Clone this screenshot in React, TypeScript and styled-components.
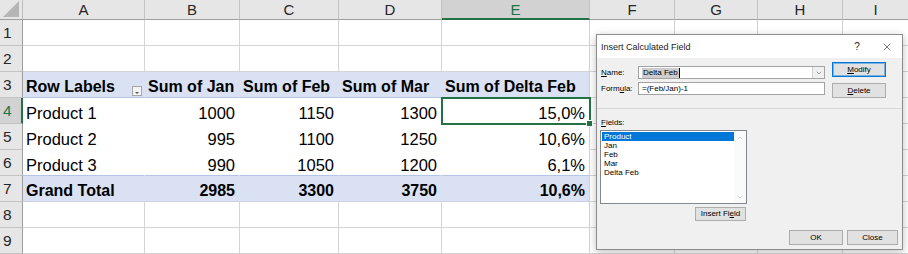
import * as React from 'react';
import styled, { createGlobalStyle, css } from 'styled-components';
import { ChevronDown, ChevronUp, X } from 'lucide-react';

const GlobalStyle = createGlobalStyle`
  html, body {
    margin: 0;
    padding: 0;
    background: #fff;
    overflow: hidden;
  }
  body {
    font-family: 'Liberation Sans', Arial, sans-serif;
  }
`;

const COLS = ['A', 'B', 'C', 'D', 'E', 'F', 'G', 'H', 'I'];
const COL_WIDTHS = [122, 95, 99, 103, 148, 85, 83, 85, 66];
const ACTIVE_COL = 4;
const ACTIVE_ROW = 4;

type CellKind = 'plain' | 'head' | 'body' | 'total';

type CellProps = {
  $kind: CellKind;
  $right?: boolean;
  $edge?: boolean;
  $beforeTotal?: boolean;
  $active?: boolean;
};

const pivot = [
  ['Row Labels', 'Sum of Jan', 'Sum of Feb', 'Sum of Mar', 'Sum of Delta Feb'],
  ['Product 1', '1000', '1150', '1300', '15,0%'],
  ['Product 2', '995', '1100', '1250', '10,6%'],
  ['Product 3', '990', '1050', '1200', '6,1%'],
  ['Grand Total', '2985', '3300', '3750', '10,6%'],
];

const fields = ['Product', 'Jan', 'Feb', 'Mar', 'Delta Feb'];

const Sheet = styled.div`
  position: relative;
  display: grid;
  grid-template-columns: 23px ${COL_WIDTHS.map((w) => `${w}px`).join(' ')};
  grid-template-rows: 20px repeat(9, 26px);
  width: 908px;
  height: 254px;
  overflow: hidden;
`;

const Corner = styled.div`
  display: flex;
  align-items: flex-end;
  justify-content: flex-end;
  padding: 0 3px 2px 0;
  background: #e6e6e6;
  border-right: 1px solid #bdbdbd;
  border-bottom: 1px solid #9e9e9e;
  box-sizing: border-box;

  &::after {
    content: '';
    width: 16px;
    height: 16px;
    background: #b5b5b5;
    clip-path: polygon(100% 0, 100% 100%, 0 100%);
  }
`;

const ColHead = styled.div<{ $active?: boolean }>`
  display: flex;
  align-items: center;
  justify-content: center;
  box-sizing: border-box;
  font-size: 15px;
  color: ${({ $active }) => ($active ? '#217346' : '#262626')};
  background: ${({ $active }) => ($active ? '#d2d2d2' : '#e6e6e6')};
  border-right: 1px solid #c3c3c3;
  border-bottom: ${({ $active }) => ($active ? '2px solid #217346' : '1px solid #9e9e9e')};
`;

const RowHead = styled.div<{ $active?: boolean }>`
  display: flex;
  align-items: center;
  padding-left: 3px;
  box-sizing: border-box;
  font-size: 15.5px;
  color: ${({ $active }) => ($active ? '#217346' : '#262626')};
  background: ${({ $active }) => ($active ? '#d2d2d2' : '#e6e6e6')};
  border-bottom: 1px solid #c3c3c3;
  border-right: ${({ $active }) => ($active ? '2px solid #217346' : '1px solid #9e9e9e')};
`;

const kindStyles = {
  plain: css``,
  head: css<CellProps>`
    background: #d9e1f2;
    font-weight: bold;
    font-size: 16px;
    border-right-color: ${({ $edge }) => ($edge ? '#d4d4d4' : '#d9e1f2')};
    border-bottom-color: #b4c6e7;
  `,
  body: css<CellProps>`
    border-right-color: ${({ $edge }) => ($edge ? '#d4d4d4' : '#fff')};
    border-bottom-color: ${({ $beforeTotal }) => ($beforeTotal ? '#b4c6e7' : '#fff')};
  `,
  total: css<CellProps>`
    background: #d9e1f2;
    font-weight: bold;
    font-size: 16px;
    border-right-color: ${({ $edge }) => ($edge ? '#d4d4d4' : '#d9e1f2')};
    border-bottom-color: #c8d1e6;
  `,
};

const Cell = styled.div<CellProps>`
  position: relative;
  display: flex;
  align-items: flex-end;
  justify-content: ${({ $right }) => ($right ? 'flex-end' : 'flex-start')};
  padding: ${({ $right }) => ($right ? '0 4px 0 0' : '0 0 0 3px')};
  box-sizing: border-box;
  font-size: 16.5px;
  line-height: 20px;
  color: #000;
  white-space: nowrap;
  background: #fff;
  border-right: 1px solid #d4d4d4;
  border-bottom: 1px solid #d4d4d4;
  ${({ $kind }) => kindStyles[$kind]}

  ${({ $active }) =>
    $active &&
    css`
      z-index: 2;
      outline: 2px solid #217346;
      outline-offset: -1px;

      &::after {
        content: '';
        position: absolute;
        right: -4px;
        bottom: -4px;
        width: 5px;
        height: 5px;
        background: #217346;
        border: 1px solid #fff;
      }
    `}
`;

const FilterButton = styled.span`
  display: flex;
  align-items: center;
  justify-content: center;
  width: 10px;
  height: 10px;
  margin: 0 2px 1px auto;
  box-sizing: border-box;
  border: 1px solid #a6a6a6;
  background: #f4f4f4;

  &::after {
    content: '';
    margin-top: 3px;
    border-left: 2px solid transparent;
    border-right: 2px solid transparent;
    border-top: 2px solid #555;
  }
`;

const Dialog = styled.div`
  position: absolute;
  left: 596px;
  top: 34px;
  z-index: 5;
  width: 307px;
  box-sizing: border-box;
  display: flex;
  flex-direction: column;
  border: 1px solid #8c8c8c;
  background: #f0f0f0;
  box-shadow: 0 2px 8px rgba(0, 0, 0, 0.25);
  font-family: 'Liberation Sans', Arial, sans-serif;
  font-size: 8px;
  line-height: 10px;
  color: #000;
`;

const TitleBar = styled.div`
  display: flex;
  align-items: center;
  height: 23px;
  padding-left: 4px;
  background: #fff;
  font-size: 9px;
  color: #1a1a1a;
`;

const TitleText = styled.span`
  flex: 1;
`;

const TitleButton = styled.span`
  display: flex;
  align-items: center;
  justify-content: center;
  width: 30px;
  height: 100%;
  font-size: 10px;
  color: #222;
`;

const TopSection = styled.div`
  display: flex;
  padding-left: 4px;
`;

const FormCol = styled.div`
  display: flex;
  flex-direction: column;
  gap: 3px;
  margin-top: 8px;
`;

const FormRow = styled.div`
  display: flex;
  align-items: center;
  height: 13px;
`;

const Label = styled.span`
  width: 37px;
`;

const TextBox = styled.div`
  display: flex;
  align-items: center;
  width: 187px;
  height: 13px;
  box-sizing: border-box;
  padding-left: 3px;
  border: 1px solid #a3a3a3;
  background: #fff;
`;

const Selection = styled.span`
  background: #cdcdcd;
  padding: 0 1px;
  border-right: 1px solid #000;
`;

const ComboArrow = styled.span`
  display: flex;
  align-items: center;
  justify-content: center;
  width: 11px;
  height: 100%;
  margin-left: auto;
  border-left: 1px solid #d0d0d0;
  background: #f0f0f0;
  color: #606060;
`;

const ButtonCol = styled.div`
  display: flex;
  flex-direction: column;
  gap: 6px;
  margin: 4px 0 0 7px;
`;

const Button = styled.div<{ $default?: boolean; $w: number; $h?: number }>`
  display: flex;
  align-items: center;
  justify-content: center;
  width: ${({ $w }) => $w}px;
  height: ${({ $h = 15 }) => $h}px;
  box-sizing: border-box;
  background: #e1e1e1;
  border: 1px solid ${({ $default }) => ($default ? '#0078d7' : '#adadad')};
  box-shadow: ${({ $default }) => ($default ? 'inset 0 0 0 1px rgba(0, 120, 215, 0.45)' : 'none')};
`;

const Separator = styled.div`
  height: 1px;
  margin-top: 10px;
  background: #d9d9d9;
`;

const FieldsCol = styled.div`
  display: flex;
  flex-direction: column;
  width: 147px;
  margin-left: 3px;
`;

const FieldsLabel = styled.span`
  margin-top: 9px;
  padding-left: 1px;
`;

const ListBox = styled.div`
  display: flex;
  height: 74px;
  margin-top: 2px;
  box-sizing: border-box;
  border: 1px solid #828790;
  background: #fff;
`;

const Items = styled.div`
  flex: 1;
  padding: 1px 0 0 1px;
`;

const Item = styled.div<{ $selected?: boolean }>`
  height: 9px;
  line-height: 9px;
  padding-left: 2px;
  color: ${({ $selected }) => ($selected ? '#fff' : '#000')};
  background: ${({ $selected }) => ($selected ? '#0078d7' : 'transparent')};
`;

const ScrollBar = styled.div`
  display: flex;
  flex-direction: column;
  align-items: center;
  justify-content: space-between;
  width: 12px;
  padding: 3px 0 2px;
  box-sizing: border-box;
  background: #fafafa;
  color: #b0b0b0;
`;

const InsertRow = styled.div`
  display: flex;
  justify-content: flex-end;
  margin: 3px 1px 0 0;
`;

const Footer = styled.div`
  display: flex;
  justify-content: flex-end;
  gap: 4px;
  margin: 9px 4px 4px 0;
`;

function cellKind(row: number, col: number): CellKind {
  if (row < 3 || row > 7 || col > 4) return 'plain';
  if (row === 3) return 'head';
  if (row === 7) return 'total';
  return 'body';
}

function renderCell(row: number, col: number) {
  const kind = cellKind(row, col);
  const value = kind === 'plain' ? '' : pivot[row - 3][col];
  const isNumber = kind === 'body' || kind === 'total' ? col > 0 : false;

  return (
    <Cell
      key={`${row}-${col}`}
      $kind={kind}
      $right={isNumber}
      $edge={col === 4}
      $beforeTotal={row === 6}
      $active={row === ACTIVE_ROW && col === ACTIVE_COL}
    >
      {value}
      {row === 3 && col === 0 && <FilterButton />}
    </Cell>
  );
}

export default function App() {
  const rows = Array.from({ length: 9 }, (_, i) => i + 1);

  return (
    <>
      <GlobalStyle />
      <Sheet>
        <Corner />
        {COLS.map((c, i) => (
          <ColHead key={c} $active={i === ACTIVE_COL}>
            {c}
          </ColHead>
        ))}
        {rows.map((row) => (
          <React.Fragment key={row}>
            <RowHead $active={row === ACTIVE_ROW}>{row}</RowHead>
            {COLS.map((_, col) => renderCell(row, col))}
          </React.Fragment>
        ))}

        <Dialog>
          <TitleBar>
            <TitleText>Insert Calculated Field</TitleText>
            <TitleButton>?</TitleButton>
            <TitleButton>
              <X size={12} strokeWidth={1.2} />
            </TitleButton>
          </TitleBar>

          <TopSection>
            <FormCol>
              <FormRow>
                <Label>
                  <u>N</u>ame:
                </Label>
                <TextBox>
                  <Selection>Delta Feb</Selection>
                  <ComboArrow>
                    <ChevronDown size={8} strokeWidth={1.5} />
                  </ComboArrow>
                </TextBox>
              </FormRow>
              <FormRow>
                <Label>
                  Form<u>u</u>la:
                </Label>
                <TextBox>=(Feb/Jan)-1</TextBox>
              </FormRow>
            </FormCol>
            <ButtonCol>
              <Button $default $w={54}>
                <span>
                  <u>M</u>odify
                </span>
              </Button>
              <Button $w={54}>
                <span>
                  <u>D</u>elete
                </span>
              </Button>
            </ButtonCol>
          </TopSection>

          <Separator />

          <FieldsCol>
            <FieldsLabel>
              <u>F</u>ields:
            </FieldsLabel>
            <ListBox>
              <Items>
                {fields.map((f, i) => (
                  <Item key={f} $selected={i === 0}>
                    {f}
                  </Item>
                ))}
              </Items>
              <ScrollBar>
                <ChevronUp size={8} strokeWidth={1.5} />
                <ChevronDown size={8} strokeWidth={1.5} />
              </ScrollBar>
            </ListBox>
            <InsertRow>
              <Button $w={51} $h={14}>
                <span>
                  Insert Fi<u>e</u>ld
                </span>
              </Button>
            </InsertRow>
          </FieldsCol>

          <Footer>
            <Button $w={54}>OK</Button>
            <Button $w={51}>Close</Button>
          </Footer>
        </Dialog>
      </Sheet>
    </>
  );
}
